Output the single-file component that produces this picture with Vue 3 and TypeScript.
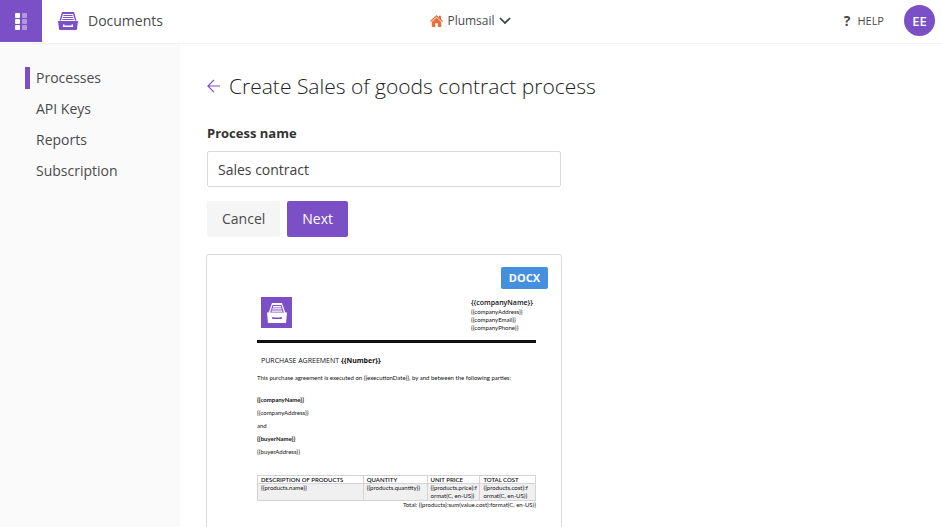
<script setup lang="ts">
import { ref } from 'vue'

interface NavItem {
  label: string
  active?: boolean
}

const navItems: NavItem[] = [
  { label: 'Processes', active: true },
  { label: 'API Keys' },
  { label: 'Reports' },
  { label: 'Subscription' },
]

const processName = ref('Sales contract')
const columns: string[] = ['DESCRIPTION OF PRODUCTS', 'QUANTITY', 'UNIT PRICE', 'TOTAL COST']
const cells: string[] = [
  '{{products.name}}',
  '{{products.quantity}}',
  '{{products.price}:f\normat(C, en-US)}',
  '{{products.cost}:f\normat(C, en-US)}',
]
const token = (name: string): string => `{{${name}}}`
const total = 'Total: {{products}:sum(value.cost):format(C, en-US)}'
</script>

<template>
  <div class="shell">
    <header class="topbar">
      <div class="brand">
        <button class="launcher" type="button" aria-label="Apps">
          <svg width="12" height="17" viewBox="0 0 12 17" aria-hidden="true">
            <g fill="#fff">
              <rect width="5" height="5" rx="1" />
              <rect y="6" width="5" height="5" rx="1" />
              <rect y="12" width="5" height="5" rx="1" />
            </g>
            <g fill="#b497e4">
              <rect x="7" width="5" height="5" rx="1" />
              <rect x="7" y="6" width="5" height="5" rx="1" />
              <rect x="7" y="12" width="5" height="5" rx="1" />
            </g>
          </svg>
        </button>
        <a class="product" href="#">
          <svg width="20" height="18" viewBox="0 0 20 18" aria-hidden="true">
            <path fill="#7b50c7" d="M4 0h12l2.500 8.500H17L15 2H5L3 8.500H1.500z" />
            <path fill="none" stroke="#7b50c7" stroke-width="1.200" d="M5.500 3.500h9M4.800 5.500h10.400M4.300 7.500h11.400" />
            <path fill="#7b50c7" d="M0 9h20l-1 8.200q-.1.800-.9.800H1.900q-.8 0-.9-.8z" />
            <path fill="none" stroke="#fff" stroke-width="1.500" d="M5.700 12.500v1.700h8.600v-1.700" />
          </svg>
          <span>Documents</span>
        </a>
      </div>
      <button class="workspace" type="button">
        <svg width="13" height="12" viewBox="0 0 13 12" aria-hidden="true">
          <path fill="#e9703b" d="M6.500 0L9 2.300V.8h2v3.300l2 1.900-.8.9L6.500 1.800.8 6.900 0 6z" />
          <path fill="#e9703b" d="M6.500 2.500l4.700 4.400V12H7.800V8.200H5.200V12H1.800V6.900z" />
        </svg>
        <span>Plumsail</span>
        <svg width="12" height="8" viewBox="0 0 12 8" aria-hidden="true">
          <path fill="none" stroke="#3c4043" stroke-width="1.700" d="M1 1l5 5 5-5" />
        </svg>
      </button>
      <div class="account">
        <a class="help" href="#"><b>?</b><span>HELP</span></a>
        <button class="avatar" type="button">EE</button>
      </div>
    </header>

    <div class="body">
      <nav class="sidebar">
        <a v-for="item in navItems" :key="item.label" href="#" :class="{ active: item.active }">{{ item.label }}</a>
      </nav>

      <main class="content">
        <div class="title">
          <a class="back" href="#" aria-label="Back">
            <svg width="14" height="14" viewBox="0 0 14 14" aria-hidden="true">
              <path fill="none" stroke="#7b50c7" stroke-width="1.200" d="M13 7H1M7 .8L.9 7 7 13.200" />
            </svg>
          </a>
          <h1>Create Sales of goods contract process</h1>
        </div>

        <form class="form" @submit.prevent>
          <label for="process-name">Process name</label>
          <input id="process-name" v-model="processName" type="text" />
          <div class="actions">
            <button class="cancel" type="button">Cancel</button>
            <button class="next" type="submit">Next</button>
          </div>
        </form>

        <section class="preview">
          <span class="badge">DOCX</span>
          <div class="letterhead">
            <div class="logo">
              <svg width="20" height="20" viewBox="0 0 20 20" aria-hidden="true">
                <path fill="#fff" d="M5 0h10l3.500 10H17L14.500 2h-9L3 10H1.500z" />
                <path fill="none" stroke="#fff" stroke-width="1.400" d="M6 3.700h8M5.300 5.900h9.400M4.600 8.100h10.800" />
                <path fill="#fff" d="M0 9.500h20L19 20H1z" />
                <path fill="none" stroke="#7b50c7" stroke-width="1.500" d="M6 14v1.200h8V14" />
              </svg>
            </div>
            <address>
              <strong>{{ token('companyName') }}</strong>
              <span>{{ token('companyAddress') }}</span>
              <span>{{ token('companyEmail') }}</span>
              <span>{{ token('companyPhone') }}</span>
            </address>
          </div>
          <h2>PURCHASE AGREEMENT <b>{{ token('Number') }}</b></h2>
          <p class="intro">This purchase agreement is executed on {{ token('executionDate') }}, by and between the following parties:</p>
          <div class="parties">
            <b>{{ token('companyName') }}</b>
            <span>{{ token('companyAddress') }}</span>
            <span>and</span>
            <b>{{ token('buyerName') }}</b>
            <span>{{ token('buyerAddress') }}</span>
          </div>
          <table>
            <thead>
              <tr><th v-for="column in columns" :key="column" scope="col">{{ column }}</th></tr>
            </thead>
            <tbody>
              <tr><td v-for="cell in cells" :key="cell">{{ cell }}</td></tr>
            </tbody>
          </table>
          <p class="total">{{ total }}</p>
        </section>
      </main>
    </div>
  </div>
</template>

<style>
body {
  margin: 0;
  background: #fff;
}
</style>

<style scoped>
.shell {
  display: flex;
  flex-direction: column;
  height: 100vh;
  overflow: hidden;
  color: #4a4a4a;
  font: 14px/20px "Open Sans", "Noto Sans", sans-serif;
}
.shell * {
  box-sizing: border-box;
}
a {
  color: inherit;
  text-decoration: none;
}
button {
  border: 0;
  padding: 0;
  background: none;
  color: inherit;
  font: inherit;
  cursor: pointer;
}
svg {
  display: block;
  flex: none;
}
.topbar {
  display: grid;
  grid-template-columns: 1fr auto 1fr;
  flex: none;
  height: 44px;
  border-bottom: 1px solid #f0f0f0;
}
.brand,
.product,
.workspace,
.account,
.help {
  display: flex;
  align-items: center;
}
.brand {
  align-items: flex-start;
  gap: 16px;
}
.launcher {
  display: grid;
  place-items: center;
  width: 42px;
  height: 42px;
  background: #7b50c7;
}
.product {
  gap: 10px;
  height: 42px;
}
.workspace {
  gap: 4px;
  height: 41px;
  font-size: 12px;
}
.account {
  justify-content: flex-end;
  gap: 20px;
  height: 41px;
  padding-right: 6px;
}
.help {
  gap: 7px;
  font-size: 11px;
}
.help b {
  font-size: 14px;
}
.avatar {
  width: 31px;
  height: 31px;
  border-radius: 50%;
  background: #7b50c7;
  color: #fff;
  font-size: 13px;
  font-weight: 600;
}
.body {
  display: flex;
  flex: 1;
  min-height: 0;
}
.sidebar {
  display: flex;
  flex: none;
  flex-direction: column;
  gap: 9px;
  width: 180px;
  padding: 23px 0 0 25px;
  background: #fafafa;
}
.sidebar a {
  border-left: 5px solid transparent;
  padding-left: 6px;
  line-height: 22px;
}
.sidebar a.active {
  border-color: #7b50c7;
}
.content {
  flex: 1;
  overflow-y: auto;
  padding: 26px 24px 24px 27px;
  scrollbar-width: none;
}
.title {
  display: flex;
  align-items: center;
  gap: 8px;
}
h1 {
  margin: 0;
  color: #222;
  font-size: 21px;
  font-weight: 300;
  line-height: 32px;
}
.form,
.preview {
  max-width: 354px;
}
.form {
  display: flex;
  flex-direction: column;
  margin-top: 21px;
}
.form label {
  color: #333;
  font-size: 13px;
  font-weight: 700;
}
.form input {
  height: 36px;
  margin-top: 8px;
  border: 1px solid #d9d9d9;
  border-radius: 2px;
  padding: 0 10px;
  background: #fff;
  color: #404040;
  font: inherit;
}
.actions {
  display: flex;
  gap: 7px;
  margin-top: 14px;
}
.actions button {
  height: 36px;
  border-radius: 2px;
  padding: 0 15px;
}
.cancel {
  background: #f5f5f5;
}
.actions .next {
  background: #7b50c7;
  color: #fff;
}
.preview {
  position: relative;
  max-width: 356px;
  height: 460px;
  margin: 17px 0 0 -1px;
  border: 1px solid #d9d9d9;
  border-radius: 3px;
  padding: 42px 25px 0 50px;
  color: #111;
  font: 6px/8px Lato, sans-serif;
}
.badge {
  position: absolute;
  top: 12px;
  right: 13px;
  border-radius: 2px;
  padding: 0 8px;
  background: #4490df;
  color: #fff;
  font-family: "Open Sans", sans-serif;
  font-size: 11px;
  font-weight: 700;
  line-height: 22px;
}
.letterhead {
  display: flex;
  justify-content: space-between;
  height: 46px;
  border-bottom: 3px solid #111;
  padding: 0 3px 0 4px;
}
.logo {
  display: grid;
  place-items: center;
  width: 31px;
  height: 31px;
  background: #7b50c7;
}
address {
  display: flex;
  flex-direction: column;
  padding-top: 1px;
  font-style: normal;
}
address strong,
h2 {
  font-family: "Open Sans", sans-serif;
  font-size: 7px;
  line-height: 10px;
}
address strong {
  font-weight: 600;
}
h2 {
  margin: 13px 0 0 4px;
  font-weight: 400;
}
p {
  margin: 0;
}
.intro {
  margin-top: 8px;
}
.parties {
  display: flex;
  flex-direction: column;
  gap: 5px;
  margin-top: 14px;
}
table {
  width: 100%;
  margin-top: 19px;
  border-collapse: collapse;
  table-layout: fixed;
}
th,
td {
  border: 1px solid #d4d4d8;
  padding: 0 2px 0 3px;
  font-weight: 400;
  text-align: left;
  vertical-align: top;
  white-space: pre;
}
th {
  font-weight: 600;
  line-height: 7px;
}
td {
  background: #f0f0f1;
}
th:nth-child(1) {
  width: 38%;
}
th:nth-child(2) {
  width: 23%;
}
th:nth-child(3) {
  width: 19%;
}
.total {
  text-align: right;
}
</style>
